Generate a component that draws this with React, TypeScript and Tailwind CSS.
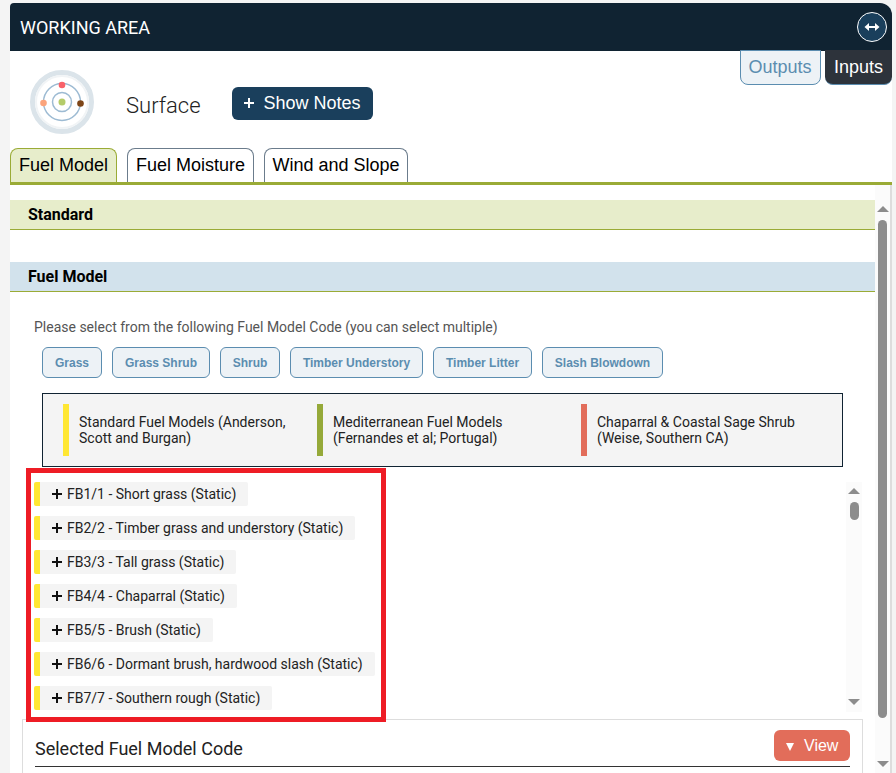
const filters = [
  { label: "Grass", width: "w-[60px]" },
  { label: "Grass Shrub", width: "w-[98px]" },
  { label: "Shrub", width: "w-[60px]" },
  { label: "Timber Understory", width: "w-[133px]" },
  { label: "Timber Litter", width: "w-[99px]" },
  { label: "Slash Blowdown", width: "w-[121px]" },
];

const legend = [
  { color: "bg-[#ffe733]", width: "w-[254px]", lines: ["Standard Fuel Models (Anderson,", "Scott and Burgan)"] },
  { color: "bg-[#95a939]", width: "w-[264px]", lines: ["Mediterranean Fuel Models", "(Fernandes et al; Portugal)"] },
  { color: "bg-[#e26d5a]", width: "w-[240px]", lines: ["Chaparral & Coastal Sage Shrub", "(Weise, Southern CA)"] },
];

const fuelModels = [
  "FB1/1 - Short grass (Static)",
  "FB2/2 - Timber grass and understory (Static)",
  "FB3/3 - Tall grass (Static)",
  "FB4/4 - Chaparral (Static)",
  "FB5/5 - Brush (Static)",
  "FB6/6 - Dormant brush, hardwood slash (Static)",
  "FB7/7 - Southern rough (Static)",
];

function UpArrow() {
  return <div className="w-0 h-0 border-x-[6px] border-x-transparent border-b-[6px] border-b-[#8c8c8c]" />;
}

function DownArrow() {
  return <div className="w-0 h-0 border-x-[6px] border-x-transparent border-t-[6px] border-t-[#8c8c8c]" />;
}

function Logo() {
  return (
    <svg width="64" height="64" viewBox="0 0 64 64" className="shrink-0">
      <circle cx="32" cy="32" r="29.5" fill="none" stroke="#dbe4ea" strokeWidth="5" />
      <circle cx="32" cy="32" r="26" fill="none" stroke="#f1f4f6" strokeWidth="2" />
      <circle cx="32" cy="32" r="18.5" fill="none" stroke="#9dbbd3" strokeWidth="1.5" />
      <circle cx="32" cy="32" r="9.5" fill="none" stroke="#9dbbd3" strokeWidth="1.5" />
      <circle cx="32" cy="32" r="3.5" fill="#b5cc6a" />
      <circle cx="32" cy="15" r="3.3" fill="#f8626a" />
      <circle cx="13.5" cy="33" r="3.3" fill="#fba47c" />
      <circle cx="50.5" cy="33.5" r="3.3" fill="#7d4517" />
    </svg>
  );
}

export default function App() {
  return (
    <div className="h-[773px] overflow-hidden bg-[#f4f4f4] pl-[10px] pt-[3px] font-['Roboto',sans-serif]">
      <div className="relative flex flex-col w-[882px] h-[770px] bg-white rounded-tr-xl rounded-tl-sm overflow-hidden">
        {/* header */}
        <div className="flex items-center justify-between shrink-0 h-[48px] pl-[10px] pr-[5px] bg-[#102332]">
          <span className="text-white text-[18px] font-normal">WORKING AREA</span>
          <button className="flex justify-center items-center w-[30px] h-[30px] rounded-full border border-white bg-[#1a3f5c]">
            <svg width="16" height="12" viewBox="0 0 16 12">
              <path d="M0.5 6L5 2V5H11V2L15.5 6L11 10V7H5V10Z" fill="#fff" />
            </svg>
          </button>
        </div>

        {/* outputs / inputs */}
        <div className="absolute top-[47px] right-0 flex gap-[4px] text-[18px] leading-none font-['Liberation_Sans',sans-serif]">
          <button className="flex items-center justify-center w-[81px] h-[35px] pr-[1px] pb-[2px] rounded-b-lg border border-[#5b8db0] bg-[#edf2f6] text-[#5b8db0]">
            Outputs
          </button>
          <button className="flex items-center justify-center w-[67px] h-[35px] rounded-b-lg border-b border-[#5b8db0] bg-[#2d333b] text-white">
            Inputs
          </button>
        </div>

        {/* title row */}
        <div className="flex items-center shrink-0 h-[97px] pl-[20px] pt-[5px]">
          <Logo />
          <span className="ml-[32px] mt-[6px] text-[22px] font-light text-[#222]">Surface</span>
          <button className="flex items-center ml-[31px] mt-[2px] h-[33px] w-[141px] pl-[12px] gap-[10px] rounded-md bg-[#1a3f5c] text-white text-[18px] font-['Liberation_Sans',sans-serif]">
            <svg width="10" height="10" viewBox="0 0 10 10" className="shrink-0">
              <path d="M5 0v10M0 5h10" stroke="#fff" strokeWidth="2" />
            </svg>
            Show Notes
          </button>
        </div>

        {/* tabs */}
        <div className="flex gap-[10px] shrink-0 h-[37px] border-b-[3px] border-[#9aab36] text-[18px] text-black font-['Liberation_Sans',sans-serif]">
          <div className="flex items-center justify-center w-[107px] h-[34px] rounded-t-lg border border-b-0 border-[#9aab36] bg-[#e7edcb]">Fuel Model</div>
          <div className="flex items-center justify-center w-[127px] h-[34px] rounded-t-lg border border-b-0 border-[#6b7c8c] bg-white">Fuel Moisture</div>
          <div className="flex items-center justify-center w-[144px] h-[34px] rounded-t-lg border border-b-0 border-[#6b7c8c] bg-white">Wind and Slope</div>
        </div>

        {/* body */}
        <div className="flex flex-1 min-h-0 border-r-2 border-[#dddddd]">
          <div className="flex-1 min-w-0 pt-[15px] overflow-hidden">
            <div className="flex items-center h-[30px] pl-[18px] bg-[#e7edcb] border-b border-[#9aab36] text-[16px] font-bold text-black">Standard</div>
            <div className="flex items-center h-[30px] mt-[32px] pl-[18px] bg-[#d2e2ec] border-b border-[#9aab36] text-[16px] font-bold text-black">Fuel Model</div>

            <p className="ml-[24px] mt-[26px] text-[14px] leading-[18px] text-[#555]">
              Please select from the following Fuel Model Code (you can select multiple)
            </p>

            <div className="flex gap-[10px] ml-[32px] mt-[11px]">
              {filters.map(({ label, width }) => (
                <button
                  key={label}
                  className={`h-[31px] rounded-md border border-[#5b8db0] bg-[#edf2f6] text-[#5b8db0] text-[12px] font-bold font-['Liberation_Sans',sans-serif] ${width}`}
                >
                  {label}
                </button>
              ))}
            </div>

            <div className="flex ml-[32px] mt-[15px] w-[801px] h-[74px] pl-[20px] pt-[10px] border border-[#102332] bg-[#f4f4f4]">
              {legend.map((item) => (
                <div key={item.lines[0]} className={`flex shrink-0 h-[52px] ${item.width}`}>
                  <div className={`w-[6px] h-[52px] shrink-0 ${item.color}`} />
                  <div className="ml-[10px] mt-[10px] text-[14px] leading-[16px] text-[#222]">
                    {item.lines.map((line) => (
                      <div key={line} className="whitespace-nowrap">{line}</div>
                    ))}
                  </div>
                </div>
              ))}
            </div>

            {/* fuel model list */}
            <div className="flex justify-between ml-[24px] mr-[13px] mt-[15px] h-[230px]">
              <div className="flex flex-col gap-[10px]">
                {fuelModels.map((name) => (
                  <div key={name} className="flex items-center self-start h-[24px] rounded-[2px] bg-[#f4f4f4] border-l-[6px] border-[#ffe733] pl-[12px] pr-[12px] text-[14px] text-[#222]">
                    <svg width="10" height="10" viewBox="0 0 10 10" className="mr-[5px] shrink-0">
                      <path d="M5 0v10M0 5h10" stroke="#111" strokeWidth="2" />
                    </svg>
                    {name}
                  </div>
                ))}
              </div>
              <div className="flex flex-col items-center w-[16px] pt-[6px] pb-[7px] bg-[#fbfbfb]">
                <UpArrow />
                <div className="w-[9px] h-[18px] mt-[8px] rounded-full bg-[#8c8c8c]" />
                <div className="flex-1" />
                <DownArrow />
              </div>
            </div>

            {/* selected */}
            <div className="ml-[12px] mr-[12px] mt-[7px] h-[60px] px-[12px] border border-[#dddddd] bg-white">
              <div className="flex items-center justify-between h-[47px] pt-[10px] border-b border-[#333]">
                <span className="text-[18px] text-[#222]">Selected Fuel Model Code</span>
                <button className="flex items-center gap-[10px] w-[76px] h-[31px] mb-[5px] pl-[12px] rounded-md bg-[#e26d5a] text-white text-[16px] font-['Liberation_Sans',sans-serif]">
                  <span className="w-0 h-0 mt-[2px] border-x-[4px] border-x-transparent border-t-[8px] border-t-white" />
                  View
                </button>
              </div>
            </div>
          </div>

          {/* page scrollbar */}
          <div className="flex flex-col items-center shrink-0 w-[15px] pt-[21px] bg-[#fbfbfb]">
            <UpArrow />
            <div className="w-[9px] h-[498px] mt-[8px] rounded-full bg-[#8c8c8c]" />
            <div className="h-[43px]" />
            <DownArrow />
          </div>
        </div>

        {/* annotation */}
        <div className="absolute left-[16px] top-[465px] w-[360px] h-[254px] border-[5px] border-[#ee1c25]" />
      </div>
    </div>
  );
}
